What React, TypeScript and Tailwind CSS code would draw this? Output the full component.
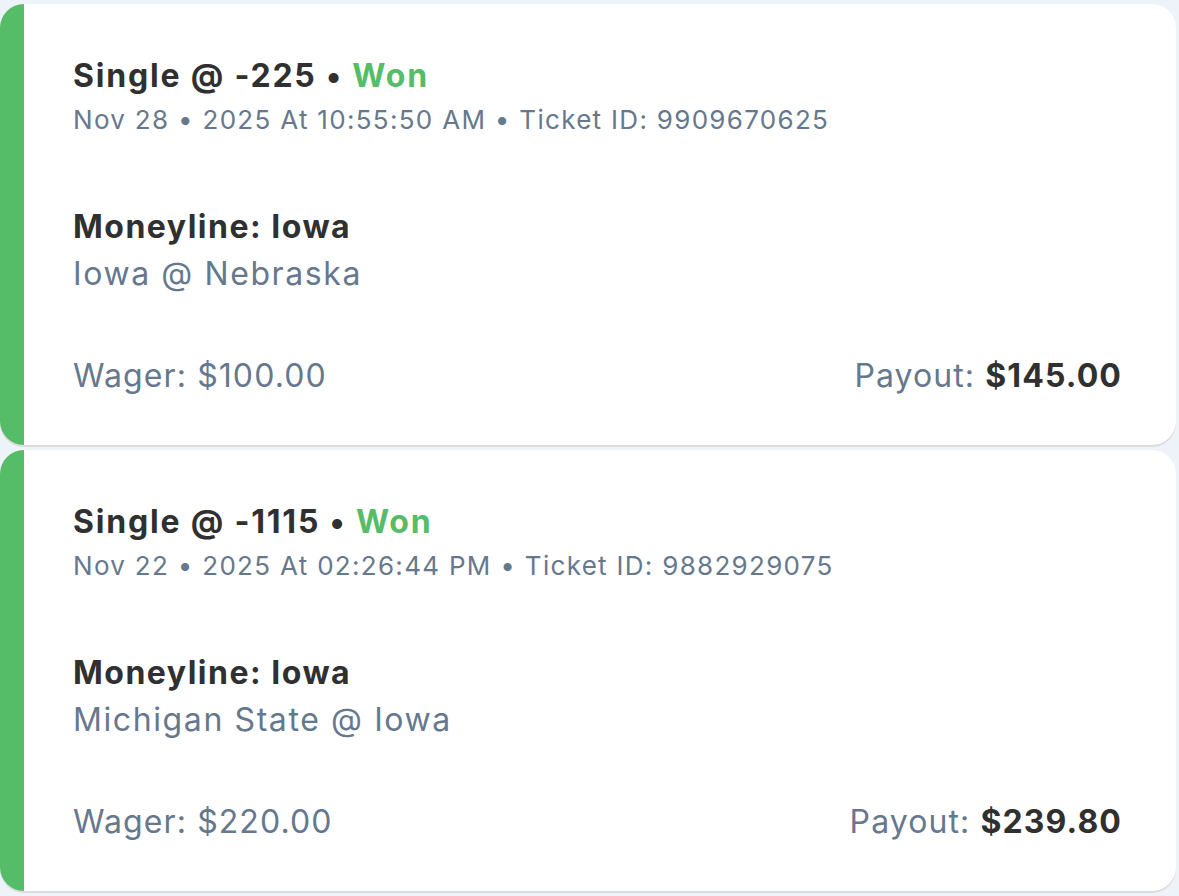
import React from 'react';

// ── Bet history cards ───────────────────────────────────────────────────────

interface Bet {
    odds: string;
    status: string;
    placed: string;
    ticket: string;
    market: string;
    matchup: string;
    wager: string;
    payout: string;
}

const bets: Bet[] = [
    {
        odds: '-225',
        status: 'Won',
        placed: 'Nov 28 • 2025 At 10:55:50 AM',
        ticket: '9909670625',
        market: 'Moneyline: Iowa',
        matchup: 'Iowa @ Nebraska',
        wager: '$100.00',
        payout: '$145.00',
    },
    {
        odds: '-1115',
        status: 'Won',
        placed: 'Nov 22 • 2025 At 02:26:44 PM',
        ticket: '9882929075',
        market: 'Moneyline: Iowa',
        matchup: 'Michigan State @ Iowa',
        wager: '$220.00',
        payout: '$239.80',
    },
];

function BetCard({ bet }: { bet: Bet }) {
    return (
        <div className="h-[441px] bg-white rounded-[24px] border-l-[24px] border-[#55bd68] shadow-[0_2px_0_#dcdcdc] pl-[49px] pr-[54px] pt-[52px]">
            <div className="text-[32px] leading-[40px] font-bold text-[#303030] tracking-[1.8px]">
                Single @ {bet.odds} • <span className="text-[#55bd68]">{bet.status}</span>
            </div>
            <div className="text-[26px] leading-[32px] text-[#66788e] mt-[8px] tracking-[1.3px]">
                {bet.placed} • Ticket ID: {bet.ticket}
            </div>
            <div className="mt-[71px] text-[32px] leading-[40px] font-bold text-[#303030] tracking-[1.5px]">{bet.market}</div>
            <div className="text-[32px] leading-[40px] text-[#66788e] mt-[7px] tracking-[1.6px]">{bet.matchup}</div>
            <div className="mt-[62px] flex justify-between items-baseline text-[32px] leading-[40px] text-[#66788e] tracking-[1.1px]">
                <span>Wager: {bet.wager}</span>
                <span>
                    Payout: <span className="font-bold text-[#303030]">{bet.payout}</span>
                </span>
            </div>
        </div>
    );
}

export default function App() {
    return (
        <div className="w-[1179px] h-[896px] overflow-hidden bg-[#eef3f9] pt-[4px] pr-[3px] flex flex-col gap-[5px] font-['Inter',sans-serif]">
            {bets.map(b => (
                <BetCard key={b.ticket} bet={b} />
            ))}
        </div>
    );
}
